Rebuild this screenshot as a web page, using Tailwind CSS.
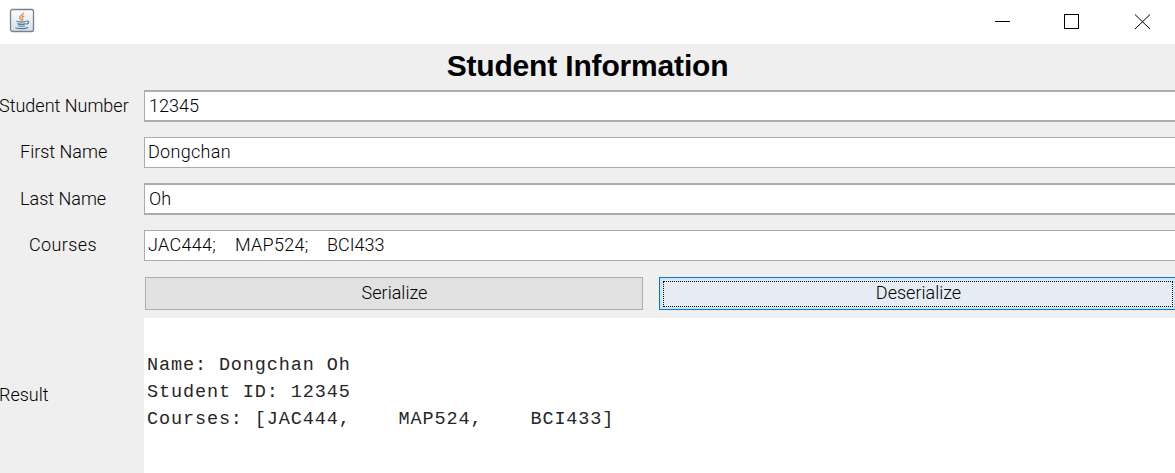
<!DOCTYPE html>
<html lang="en"><head><meta charset="utf-8"><title>Student Information</title>
<script src="https://cdn.jsdelivr.net/npm/@tailwindcss/browser@4"></script></head>
<body class="w-[1175px] h-[473px] overflow-hidden bg-[#efefef] text-black font-['Roboto','Liberation_Sans',sans-serif] font-light text-[18px]">
<header class="h-11 bg-white flex items-start justify-between">
<svg class="ml-[9px] mt-2 w-[26px] h-[25px]" viewBox="0 0 26 25" fill="none">
<defs><linearGradient id="g" x1="0" y1="0" x2="0" y2="1"><stop stop-color="#fdfefe"/><stop offset="1" stop-color="#d3dfe9"/></linearGradient></defs>
<rect x="1.5" y="1.5" width="23" height="22" rx="2" fill="url(#g)" stroke="#76818f" stroke-width="1.3"/>
<path d="M14.500 4.500c.5 2-3.800 3-3.800 5 0 1.300 1.500 2 1.500 3.300M15.300 8c-2 .8-2.500 1.500-1.800 2.700.5.800.2 1.400-.5 2" stroke="#e58c4a" stroke-width="1.400"/>
<path d="M7.500 13.300c2.500 1 7.500 1 9.500 0M8.500 15.600c2 .8 6 .8 8 0M9.300 17.700c2 .7 4.500.7 6.500 0M17.500 13.200c3-.6 3 2.500-.5 3M6.500 19.700c3 1.400 9.500 1.300 12.500-.2" stroke="#527998" stroke-width="1.200"/>
</svg>
<svg class="w-[195px] h-11" viewBox="980 0 195 44" fill="none" stroke="#000"><path d="M995 21.500h15"/><rect x="1064.500" y="14.500" width="14" height="14"/><path d="M1135 14.500l15 14.500M1150 14.500l-15 14.500"/></svg>
</header>
<main>
<h1 class="h-[46px] pt-[1px] leading-[42px] text-center font-['Liberation_Sans',sans-serif] font-bold text-[30px] tracking-[-0.17px]">Student Information</h1>
<div class="grid grid-cols-[144px_1031px] grid-rows-[32px_31px_32px_31px] gap-y-[15px]">
<label class="leading-[31px] -ml-px whitespace-nowrap">Student Number</label>
<div class="border-l border-y-2 border-[#ababab] bg-white pl-1 leading-[27px]">12345</div>
<label class="leading-[30px] pl-5">First Name</label>
<div class="border-l border-y border-[#ababab] bg-white pl-[3px] leading-[28px] tracking-[0.3px]">Dongchan</div>
<label class="leading-[31px] pl-5">Last Name</label>
<div class="border-l border-y-2 border-[#ababab] bg-white pl-1 leading-[27px]">Oh</div>
<label class="leading-[30px] pl-[29px] tracking-[0.4px]">Courses</label>
<div class="border-l border-y border-[#ababab] bg-white pl-[3px] leading-[28px] flex"><span class="w-[87px] tracking-[0.3px]">JAC444;</span><span class="w-[92px] tracking-[0.3px]">MAP524;</span><span>BCI433</span></div>
</div>
<div class="mt-4 ml-[145px] flex gap-4 h-[33px] text-center">
<button class="w-[498px] shrink-0 border border-[#adadad] bg-[#e1e1e1]"><span class="block pl-px leading-[30px] -mt-px">Serialize</span></button>
<button class="w-[517px] shrink-0 border border-r-0 border-[#0878d0] bg-[#e5ecf4] shadow-[inset_0_0_0_2px_#c9e6f8] p-[3px]"><span class="block h-[26px] border border-dotted border-black leading-[22px] pl-px">Deserialize</span></button>
</div>
<section class="mt-2 flex h-[155px]">
<label class="w-36 shrink-0 pt-[62px] leading-[30px] -ml-px mr-px">Result</label>
<pre class="grow bg-white pl-[3px] pt-[34px] font-['Liberation_Mono',monospace] font-normal text-[18.5px] tracking-[0.88px] leading-[27px] text-[#262626]">Name: Dongchan Oh
Student ID: 12345
Courses: [JAC444,    MAP524,    BCI433]</pre>
</section>
</main></body></html>
